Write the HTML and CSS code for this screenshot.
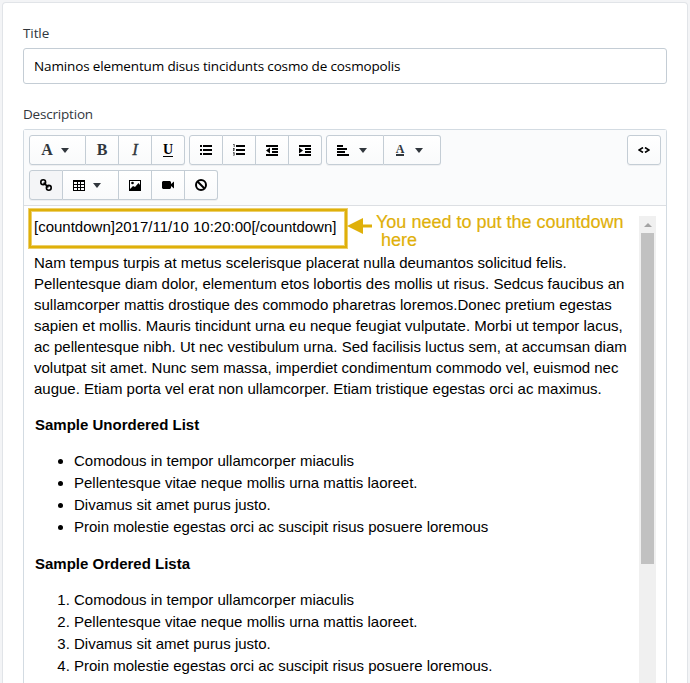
FILE: index.html
```html
<!DOCTYPE html>
<html lang="en">
<head>
<meta charset="utf-8">
<title>Description editor</title>
<link rel="stylesheet" href="styles.css">
</head>
<body>
<main class="card">
  <label class="label title-label" for="title">Title</label>
  <input class="input" id="title" value="Naminos elementum disus tincidunts cosmo de cosmopolis">
  <div class="label desc-label">Description</div>
  <section class="editor">
    <div class="toolbar">
      <div class="row">
        <div class="group">
          <button class="btn first wide"><span class="glyph">A</span><i class="caret"></i></button>
          <button class="btn"><span class="glyph bold">B</span></button>
          <button class="btn"><span class="glyph italic">I</span></button>
          <button class="btn"><span class="glyph under">U</span></button>
        </div>
        <div class="group">
          <button class="btn first"><svg width="12" height="10" viewBox="0 0 12 10"><path d="M0 0h2v2H0zM3 0h9v2H3zM0 4h2v2H0zM3 4h9v2H3zM0 8h2v2H0zM3 8h9v2H3z"/></svg></button>
          <button class="btn"><svg width="12" height="12" viewBox="0 0 12 12"><path d="M3 1h9v2H3zM3 5h9v2H3zM3 9h9v2H3z"/><path class="numerals" d="M0 0h1.600v3H.8V.8H0zM0 4h1.600v1.600L.8 6.400h.8V7H0v-.8l.8-.8H0zM0 8.200h1.600v3.400H0v-.7h.8v-.7H0v-.6h.8v-.6H0z"/></svg></button>
          <button class="btn"><svg width="12" height="11" viewBox="0 0 12 11"><path d="M0 0h12v2H0zM6 3h6v2H6zM6 6h6v2H6zM0 9h12v2H0zM4 2.500v6L0 5.500z"/></svg></button>
          <button class="btn"><svg width="12" height="11" viewBox="0 0 12 11"><path d="M0 0h12v2H0zM6 3h6v2H6zM6 6h6v2H6zM0 9h12v2H0zM0 2.500v6l4-3z"/></svg></button>
        </div>
        <div class="group">
          <button class="btn first wider align"><svg width="12" height="11" viewBox="0 0 12 11"><path d="M0 0h6v2H0zM0 3h10v2H0zM0 6h8v2H0zM0 9h12v2H0z"/></svg><i class="caret"></i></button>
          <button class="btn wider"><span class="glyph color">A</span><i class="caret"></i></button>
        </div>
        <button class="btn code"><svg width="12" height="6" viewBox="0 0 12 6"><path class="line" d="M5 .5 1 3l4 2.500M7 .5 11 3 7 5.500"/></svg></button>
      </div>
      <div class="row">
        <div class="group">
          <button class="btn first active"><svg width="12" height="12" viewBox="0 0 12 12"><g class="line"><circle cx="3.200" cy="3.200" r="2.400"/><circle cx="8.800" cy="8.800" r="2.400"/><path d="m3.600 3.600 4.800 4.800"/></g></svg></button>
          <button class="btn wide second"><svg width="12" height="11" viewBox="0 0 12 11"><path fill-rule="evenodd" d="M0 0h12v11H0zM1 2v2h3V2zM5 2v2h2V2zM8 2v2h3V2zM1 5v2h3V5zM5 5v2h2V5zM8 5v2h3V5zM1 8v2h3V8zM5 8v2h2V8zM8 8v2h3V8z"/></svg><i class="caret"></i></button>
          <button class="btn"><svg width="12" height="11" viewBox="0 0 12 11"><path fill-rule="evenodd" d="M0 0h12v11H0zM1 1v8l3-3 2 1 3.500-4L11 5V1z"/><circle cx="3.500" cy="3" r="1.300"/></svg></button>
          <button class="btn"><svg width="12" height="8" viewBox="0 0 12 8"><path d="M1 0h7l1 1v2l3-2.500v7L9 5v2L8 8H1L0 7V1z"/></svg></button>
          <button class="btn"><svg width="12" height="12" viewBox="0 0 12 12"><g class="line thick"><circle cx="6" cy="6" r="5"/><path d="m2.500 2.500 7 7"/></g></svg></button>
        </div>
      </div>
    </div>
    <div class="body">
      <article class="content">
        <p class="code-line">[countdown]2017/11/10 10:20:00[/countdown]</p>
        <p>Nam tempus turpis at metus scelerisque placerat nulla deumantos solicitud felis.<br>Pellentesque diam dolor, elementum etos lobortis des mollis ut risus. Sedcus faucibus an<br>sullamcorper mattis drostique des commodo pharetras loremos.Donec pretium egestas<br>sapien et mollis. Mauris tincidunt urna eu neque feugiat vulputate. Morbi ut tempor lacus,<br>ac pellentesque nibh. Ut nec vestibulum urna. Sed facilisis luctus sem, at accumsan diam<br>volutpat sit amet. Nunc sem massa, imperdiet condimentum commodo vel, euismod nec<br>augue. Etiam porta vel erat non ullamcorper. Etiam tristique egestas orci ac maximus.</p>
        <h2>Sample Unordered List</h2>
        <ul>
          <li>Comodous in tempor ullamcorper miaculis</li>
          <li>Pellentesque vitae neque mollis urna mattis laoreet.</li>
          <li>Divamus sit amet purus justo.</li>
          <li>Proin molestie egestas orci ac suscipit risus posuere loremous</li>
        </ul>
        <h2>Sample Ordered Lista</h2>
        <ol>
          <li>Comodous in tempor ullamcorper miaculis</li>
          <li>Pellentesque vitae neque mollis urna mattis laoreet.</li>
          <li>Divamus sit amet purus justo.</li>
          <li>Proin molestie egestas orci ac suscipit risus posuere loremous.</li>
        </ol>
      </article>
      <div class="scrollbar"><i class="up"></i><div class="thumb"></div></div>
      <div class="highlight"></div>
      <svg class="arrow" width="25" height="16" viewBox="0 0 25 16"><path d="M0 8 16 0v6.500h9v3h-9V16z"/></svg>
      <div class="note"><div>You need to put the countdown</div><div class="note-end">here</div></div>
    </div>
  </section>
</main>
</body>
</html>
```
FILE: styles.css
```css
* { box-sizing: border-box; }
html, body { height: 100%; }
body {
  margin: 0;
  padding: 3px 3px 0;
  overflow: hidden;
  background: #f3f4f6;
}
.card {
  display: flex;
  flex-direction: column;
  height: 680px;
  padding: 20px 20px 0;
  background: #fff;
  border-radius: 3px 3px 0 0;
  box-shadow: 0 0 0 1px #e1e4e8;
}
.label {
  flex: none;
  font: 13.5px/20px "Open Sans", sans-serif;
  color: #31373d;
}
.title-label { height: 25px; letter-spacing: -.1px; }
.desc-label { height: 45px; padding-top: 20px; letter-spacing: -.2px; }
.input {
  flex: none;
  width: 644px;
  height: 36px;
  padding: 0 10px;
  border: 1px solid #c4cdd5;
  border-radius: 3px;
  font: 13.5px "Open Sans", sans-serif;
  letter-spacing: -.14px;
  color: #000;
  background: #fff;
}
.editor {
  flex: 1;
  min-height: 0;
  display: flex;
  flex-direction: column;
  border: 1px solid #d3dbe2;
  border-bottom: 0;
  border-radius: 3px 3px 0 0;
}
.toolbar {
  flex: none;
  height: 76px;
  padding: 5px;
  background: #fafbfc;
  border-bottom: 1px solid #dcdfe3;
  display: flex;
  flex-direction: column;
  gap: 5px;
}
.row { display: flex; gap: 4px; }
.group { display: flex; }
.btn {
  display: flex;
  align-items: center;
  justify-content: center;
  width: 33px;
  height: 30px;
  padding: 0;
  border: 1px solid #c4cdd5;
  border-left: 0;
  background: linear-gradient(#fff, #f9fafb);
  box-shadow: 0 1px 0 rgba(22, 29, 37, .05);
  color: #31373d;
}
.btn.first { width: 34px; border-left: 1px solid #c4cdd5; border-radius: 3px 0 0 3px; }
.btn:last-child { border-radius: 0 3px 3px 0; }
.btn.wide { width: 57px; gap: 8px; padding-right: 5px; }
.btn.second { width: 56px; padding-right: 7px; }
.btn.wider { width: 57px; gap: 11px; padding-right: 5px; }
.btn.first.wider { width: 58px; }
.btn.align { gap: 10px; padding-right: 7px; }
.btn.active { background: #f4f5f7; }
.btn.code { width: 34px; margin-left: auto; border-left: 1px solid #c4cdd5; border-radius: 3px; }
.btn svg { display: block; fill: #000; }
.btn .line { fill: none; stroke: #000; stroke-width: 1.600; }
.btn .thick { stroke-width: 2; }
.numerals { opacity: .8; }
.glyph { font: bold 16px/18px "Liberation Serif", serif; }
.bold { font-size: 16px; }
.italic { font-style: italic; font-weight: normal; font-size: 17px; -webkit-text-stroke: .3px #31373d; }
.under { font-size: 14px; line-height: 12px; color: #000; border-bottom: 1px solid #000; height: 13px; }
.color { font-size: 12px; line-height: 9px; height: 11px; border-bottom: 2px solid #31373d; }
.caret { border: 4.5px solid transparent; border-top: 5px solid #31373d; border-bottom: 0; margin-top: 1px; }
.body { position: relative; flex: 1; display: flex; min-height: 0; }
.content {
  flex: 1;
  padding: 10px 0 0 10px;
  font: 15px/21px "Liberation Sans", Arial, sans-serif;
  color: #000;
  white-space: nowrap;
}
.content p { margin: 0 0 15px; }
.content h2 { margin: 0 0 15px 1px; font-size: 15px; line-height: 21px; }
.content ul, .content ol { margin: 0 0 15px; padding-left: 40px; line-height: 22px; }
.scrollbar {
  width: 17px;
  margin: 10px 10px 0 0;
  background: #f0f0f0;
  display: flex;
  flex-direction: column;
  align-items: center;
}
.up { margin: 7px 0 6px; border: 4px solid transparent; border-top: 0; border-bottom: 4px solid #a3a3a3; }
.thumb { width: 13px; height: 331px; background: #c1c1c1; }
.highlight {
  position: absolute;
  left: 5px;
  top: 3px;
  width: 318px;
  height: 39px;
  border: 2px solid #dfb00a;
  box-shadow: 0 0 0 1px #eccf6c, inset 0 0 0 1px #eccf6c;
}
.arrow { position: absolute; left: 323px; top: 12px; fill: #dfb00a; }
.note {
  position: absolute;
  left: 352px;
  top: 7px;
  font: 18px/18px "Liberation Sans", Arial, sans-serif;
  color: #dfb00a;
  -webkit-text-stroke: .2px #dfb00a;
  white-space: nowrap;
}
.note-end { padding-left: 5px; }
```
